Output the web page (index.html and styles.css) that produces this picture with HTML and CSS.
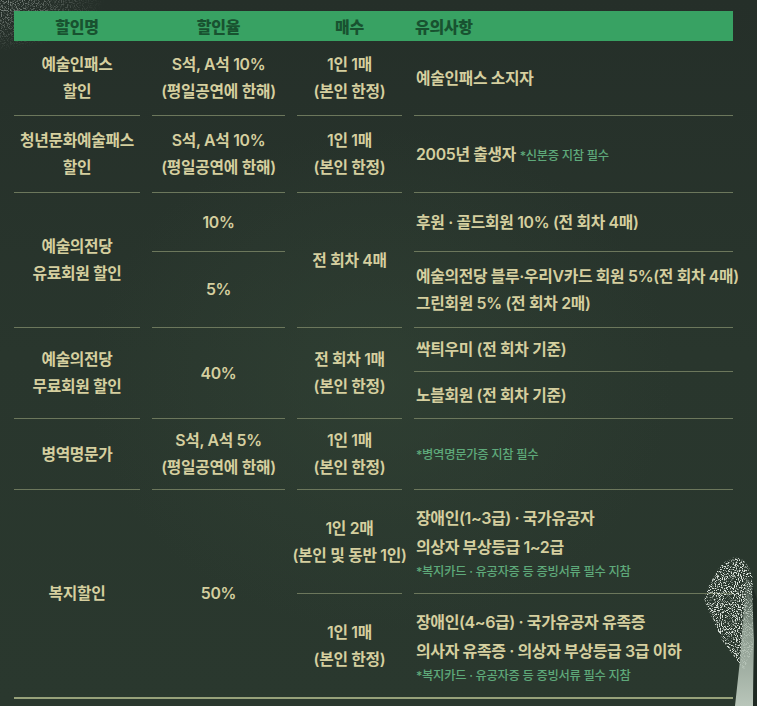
FILE: index.html
```html
<!DOCTYPE html>
<html lang="ko">
<head>
<meta charset="utf-8">
<title>할인 안내</title>
<link rel="stylesheet" href="styles.css">
</head>
<body>
<div class="page">
  <svg class="deco deco-tl" width="150" height="70" viewBox="0 0 150 70" aria-hidden="true">
    <defs>
      <filter id="speckA" x="0" y="0" width="100%" height="100%">
        <feTurbulence type="fractalNoise" baseFrequency="0.85" numOctaves="2" seed="4" result="n"/>
        <feColorMatrix in="n" type="matrix" values="0 0 0 0 0.42  0 0 0 0 0.47  0 0 0 0 0.44  0 0 0 5 -2.4" result="d"/>
        <feComposite in="d" in2="SourceGraphic" operator="in"/>
      </filter>
      <radialGradient id="gTL" cx="0.2" cy="0.25" r="0.7">
        <stop offset="0" stop-color="#000" stop-opacity="0.9"/>
        <stop offset="1" stop-color="#000" stop-opacity="0"/>
      </radialGradient>
    </defs>
    <ellipse cx="25" cy="18" rx="100" ry="40" fill="url(#gTL)" filter="url(#speckA)"/>
  </svg>

  <div class="table">
    <div class="thead">
      <div class="th">할인명</div>
      <div class="th">할인율</div>
      <div class="th">매수</div>
      <div class="th th-left">유의사항</div>
    </div>
    <div class="tbody">
      <div class="td">예술인패스<br>할인</div>
      <div class="td">S석, A석 10%<br>(평일공연에 한해)</div>
      <div class="td">1인 1매<br>(본인 한정)</div>
      <div class="td td-left">예술인패스 소지자</div>

      <div class="td">청년문화예술패스<br>할인</div>
      <div class="td">S석, A석 10%<br>(평일공연에 한해)</div>
      <div class="td">1인 1매<br>(본인 한정)</div>
      <div class="td td-left">2005년 출생자&nbsp;<span class="note note-inline">*신분증 지참 필수</span></div>

      <div class="td span2">예술의전당<br>유료회원 할인</div>
      <div class="td">10%</div>
      <div class="td span2">전 회차 4매</div>
      <div class="td td-left">후원 · 골드회원 10% (전 회차 4매)</div>
      <div class="td">5%</div>
      <div class="td td-left">예술의전당 블루·우리V카드 회원 5%(전 회차 4매)<br>그린회원 5% (전 회차 2매)</div>

      <div class="td span2">예술의전당<br>무료회원 할인</div>
      <div class="td span2">40%</div>
      <div class="td span2">전 회차 1매<br>(본인 한정)</div>
      <div class="td td-left">싹틔우미 (전 회차 기준)</div>
      <div class="td td-left">노블회원 (전 회차 기준)</div>

      <div class="td">병역명문가</div>
      <div class="td">S석, A석 5%<br>(평일공연에 한해)</div>
      <div class="td">1인 1매<br>(본인 한정)</div>
      <div class="td td-left"><span class="note">*병역명문가증 지참 필수</span></div>

      <div class="td span2 last">복지할인</div>
      <div class="td span2 last">50%</div>
      <div class="td">1인 2매<br>(본인 및 동반 1인)</div>
      <div class="td td-left td-stack">
        <span class="big">장애인(1~3급) · 국가유공자</span>
        <span class="big">의상자 부상등급 1~2급</span>
        <span class="note">*복지카드 · 유공자증 등 증빙서류 필수 지참</span>
      </div>
      <div class="td last">1인 1매<br>(본인 한정)</div>
      <div class="td td-left td-stack last">
        <span class="big">장애인(4~6급) · 국가유공자 유족증</span>
        <span class="big">의사자 유족증 · 의상자 부상등급 3급 이하</span>
        <span class="note">*복지카드 · 유공자증 등 증빙서류 필수 지참</span>
      </div>
    </div>
    <div class="endline"></div>
  </div>

  <svg class="deco deco-br" width="67" height="166" viewBox="0 0 67 166" aria-hidden="true">
    <defs>
      <filter id="speckB" x="0" y="0" width="100%" height="100%">
        <feTurbulence type="fractalNoise" baseFrequency="0.95" numOctaves="2" seed="9" result="n"/>
        <feColorMatrix in="n" type="matrix" values="0 0 0 0 0.72  0 0 0 0 0.78  0 0 0 0 0.72  0 0 0 7 -3.5" result="d"/>
        <feComposite in="d" in2="SourceGraphic" operator="in"/>
      </filter>
      <linearGradient id="gWedge" x1="0" y1="0" x2="0" y2="1">
        <stop offset="0" stop-color="#8e9e92" stop-opacity="0.15"/>
        <stop offset="0.4" stop-color="#a3b2a5" stop-opacity="0.8"/>
        <stop offset="1" stop-color="#c0cdc1" stop-opacity="0.95"/>
      </linearGradient>
    </defs>
    <path d="M42 18 C52 16 60 24 63 40 L63 110 L54 130 L32 100 L14 60 C20 40 30 22 42 18 Z" fill="#000" filter="url(#speckB)"/>
    <path d="M56 36 L62 44 L64 100 L63 166 L45 166 L50 120 L53 80 Z" fill="url(#gWedge)"/>
    <path d="M62 44 L67 60 L67 166 L63 166 L64 100 Z" fill="#1c261f" opacity="0.8"/>
  </svg>
</div>
</body>
</html>
```

FILE: styles.css
```css
* {
  box-sizing: border-box;
}

html, body {
  margin: 0;
  padding: 0;
}

body {
  width: 757px;
  height: 706px;
  overflow: hidden;
  background: #28352b;
  font-family: Inter, "Noto Sans CJK KR", sans-serif;
  color: #d5cf9f;
}

.page {
  position: relative;
  width: 757px;
  height: 706px;
  padding: 11px 24px 0 14px;
  background:
    radial-gradient(ellipse 420px 360px at 380px 380px, rgba(52, 70, 55, 0.5), rgba(40, 53, 43, 0) 70%),
    linear-gradient(180deg, #252f29 0%, #29362d 50%, #2a382e 100%);
}

.deco {
  position: absolute;
  pointer-events: none;
}

.deco-tl {
  left: 0;
  top: 0;
  z-index: 0;
}

.deco-br {
  left: 690px;
  top: 540px;
  z-index: 2;
}

.table {
  position: relative;
  z-index: 1;
  width: 719px;
}

.thead {
  display: grid;
  grid-template-columns: 126px 133px 105px 319px;
  column-gap: 12px;
  height: 30px;
  background: #38a263;
}

.th {
  display: flex;
  align-items: center;
  justify-content: center;
  font-size: 16px;
  font-weight: 900;
  color: #185230;
  letter-spacing: -0.3px;
}

.th-left {
  justify-content: flex-start;
  padding-left: 1px;
}

.tbody {
  display: grid;
  grid-template-columns: 126px 133px 105px 319px;
  grid-template-rows: 75px 77px 59px 76px 44px 47px 71px 104px 103px;
  column-gap: 12px;
}

.td {
  display: flex;
  align-items: center;
  justify-content: center;
  text-align: center;
  font-size: 15.8px;
  font-weight: 600;
  line-height: 27px;
  letter-spacing: -0.3px;
  white-space: nowrap;
  border-bottom: 1px solid #6c775c;
}

.td-left {
  justify-content: flex-start;
  text-align: left;
  padding-left: 2px;
}

.span2 {
  grid-row: span 2;
}

.last {
  border-bottom: none;
}

.td-stack {
  flex-direction: column;
  align-items: flex-start;
  justify-content: center;
  padding-top: 2px;
}

.td-stack .big {
  display: block;
  font-size: 16px;
  line-height: 29px;
  letter-spacing: -0.4px;
}

.td-stack .note {
  display: block;
  line-height: 20px;
}

.note {
  font-size: 12.3px;
  font-weight: 500;
  color: #5ea97a;
  letter-spacing: -0.3px;
}

.note-inline {
  position: relative;
  top: 1px;
}

.endline {
  height: 2px;
  background: #97a17a;
}
```
